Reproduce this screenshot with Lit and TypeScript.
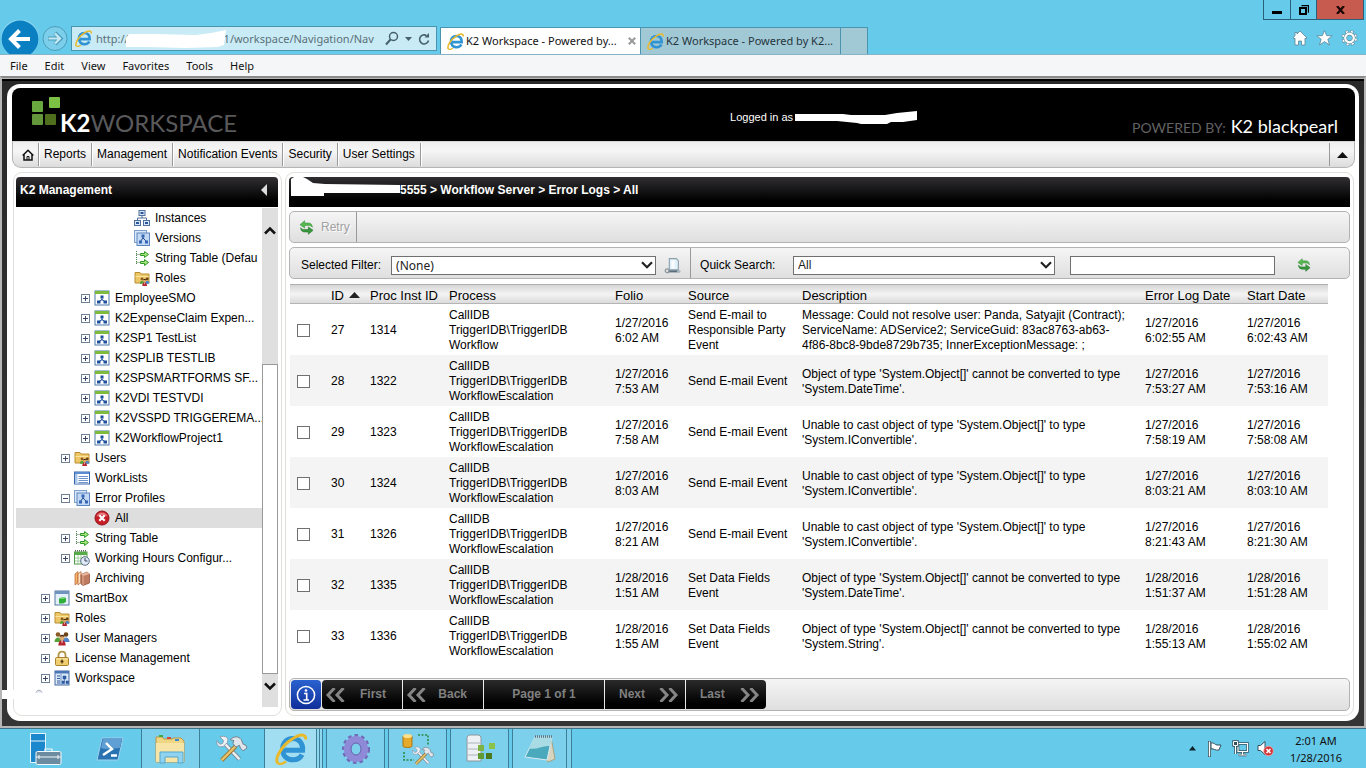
import { LitElement, html, css, svg } from "lit";
import { customElement, property } from "lit/decorators.js";
import { classMap } from "lit/directives/class-map.js";

/* ---------- icon set ---------- */

const ieLogo = svg`
  <path d="M4.2 8.6h9.6c.3-3.4-1.8-5.8-5-5.8-2.9 0-5 2.1-5 5.3s2.100 5.300 5.200 5.300c2.100 0 3.700-1 4.500-2.600" fill="none" stroke="#2f93d4" stroke-width="2.500"/>
  <path d="M4.600 7.700c.6-2.100 2-3.300 4.200-3.300" fill="none" stroke="#8fd0f2" stroke-width=".8"/>
  <path d="M1.500 15.200C-.6 13.200 3.200 6.400 8.600 3 12.500.4 15.500.2 15.400 3.300" fill="none" stroke="#e9b92c" stroke-width="1.500"/>
  <path d="M1.500 15.200c1 .6 2.600.1 4-.9" fill="none" stroke="#e9b92c" stroke-width="1.200"/>`;

const people = svg`
  <circle cx="4" cy="4.500" r="2.300" fill="#8a5a22"/><path d="M.5 12c0-6 7-6 7 0z" fill="#57a13b"/>
  <circle cx="12" cy="4.500" r="2.300" fill="#6b4416"/><path d="M8.500 12c0-6 7-6 7 0z" fill="#4c83c9"/>
  <circle cx="8" cy="7.500" r="2.500" fill="#e0a868"/><path d="M5.600 7c.4-3 4.600-3 4.900 0-1.500-1-3.400-1-4.900 0z" fill="#3c2412"/>
  <path d="M4.300 15.500c0-7 7.400-7 7.400 0z" fill="#b3242c"/><path d="M7.300 10.600h1.500L8 14z" fill="#fff"/>`;

const refreshArrow = "M1 5L6 .8v2.400h3.500c3.200 0 4.700 1.600 4.700 4.600-1-1.500-2.200-2-4.200-2H6v2.800z";

const ICONS: Record<string, unknown> = {
  process: svg`<rect x="1" y="1" width="14" height="14" fill="#fff" stroke="#4d79a8"/><path d="M1 1h14v3H1z" fill="#7dbb3c"/>
    <rect x="6.500" y="5.500" width="3" height="3" fill="#1c4f9c"/><path d="M8 8.500v2M4.500 12l3.500-2.500 3.500 2.500" stroke="#1c4f9c" fill="none"/>
    <rect x="3" y="10.500" width="3.500" height="3" fill="#1c4f9c"/><rect x="9.500" y="10.500" width="3.500" height="3" fill="#1c4f9c"/>`,
  instances: svg`<g fill="#d7e6f8" stroke="#4f6f9c"><rect x="5" y=".5" width="6" height="5"/><rect x=".5" y="10.500" width="6" height="5"/><rect x="9.500" y="10.500" width="6" height="5"/></g>
    <path d="M8 5.500V8M3.500 10.500V8h9v2.500" fill="none" stroke="#4f6f9c"/><path d="M6.500 3h3M2 13h3M11 13h3" stroke="#2c549a" stroke-width="2"/>`,
  versions: svg`<rect x=".5" y=".5" width="12" height="12" fill="#dbe8f7" stroke="#7f9fce"/><rect x="3" y="3" width="12.500" height="12.500" fill="#c3d9f3" stroke="#5e86c1"/>
    <path d="M9 5v3M6 12l3-4 4 4" fill="none" stroke="#224a8c"/><rect x="7.500" y="4.500" width="3" height="3" fill="#3567b4"/><rect x="5" y="10.500" width="3" height="3" fill="#3567b4"/><rect x="11" y="10.500" width="3" height="3" fill="#3567b4"/>`,
  strings: svg`<path d="M2.500 1v14M2.500 4.500h4M2.500 12.500h4" fill="none" stroke="#4f7f4f" stroke-dasharray="1 1"/>
    <path d="M6.500 3.500h4V1.500l4 3-4 3V5.500h-4zM6.500 11.500h4V9.500l4 3-4 3v-2h-4z" fill="#a9e47c" stroke="#2f9a2b"/>`,
  roles: svg`<path d="M1 2.500h5l1 1.500h8v9H1z" fill="#edc765" stroke="#b98d34"/><path d="M1.500 6h13v1h-13z" fill="#f8e3a0"/><g transform="translate(5.500 6) scale(.64)">${people}</g>`,
  people: people,
  list: svg`<rect x=".5" y="2" width="15" height="12" fill="#fff" stroke="#3a66ac"/><path d="M1 2h14v2H1z" fill="#5b8bd0"/><path d="M1 4h2.500v10H1z" fill="#a9c6ea"/><path d="M4.500 6.500h9.500M4.500 8.500h9.500M4.500 10.500h9.500M4.500 12.500h9.500" stroke="#6f95cc"/>`,
  error: svg`<circle cx="8" cy="8" r="7" fill="#c71e26" stroke="#93131a"/><path d="M2.500 6.500C4 1.200 12 1.200 13.500 6.500 10 4.800 6 4.800 2.500 6.500z" fill="#e8777b"/><path d="M5.300 5.300l5.400 5.400M10.700 5.300l-5.400 5.400" stroke="#fff" stroke-width="2.200"/>`,
  hours: svg`<rect x=".5" y="2" width="12.500" height="12" fill="#fff" stroke="#4e9a47"/><path d="M.5 2h12.500v3H.5z" fill="#57ab4b"/><path d="M1 .8h12" stroke="#222" stroke-dasharray="1 1"/><path d="M1 8h12M1 11h12M4 5v9M7 5v9M10 5v9" stroke="#8fc38a" stroke-width=".8"/>
    <circle cx="11" cy="11" r="4.300" fill="#dfe9f6" stroke="#5d6f8d"/><path d="M11 8v3h2.500" fill="none" stroke="#33435f"/>`,
  archive: svg`<path d="M1 4l3-2.500v11L1 15z" fill="#f6b26a" stroke="#b5602c" stroke-width=".7"/><path d="M4 4l3-2.500v11L4 15z" fill="#fbe0c2" stroke="#b5602c" stroke-width=".7"/><path d="M7 4.500l6-2.500 2.500 2v9L9 15.500 7 14z" fill="#bf7b5e" stroke="#8a4c34" stroke-width=".7"/><path d="M7 4.500l2 1.500 6.500-2-2.500-2z" fill="#e7b69e"/><path d="M9 6v9.500" stroke="#e2b09a"/>`,
  smartbox: svg`<rect x="1" y="1" width="14" height="14" fill="#e3effb" stroke="#56799f"/><path d="M1 1h14v3H1z" fill="#6f95be"/><path d="M5 8.500l4-1.500 3 1v4l-3 1.500H5z" fill="#2fae3a"/><path d="M5 8.500l4-1.500 3 1-3 1z" fill="#80dc79"/>`,
  lock: svg`<path d="M4.500 8V5c0-4.500 7-4.500 7 0v3" fill="none" stroke="#b29445" stroke-width="1.800"/><rect x="1.500" y="7.500" width="13" height="8" rx="1.200" fill="#f0cd6e" stroke="#a8822b"/><path d="M2.500 9h11" stroke="#fbecb6"/><path d="M8 9.500v4M6.500 11.500h3" stroke="#4f3a10" stroke-width="1.300"/>`,
  workspace: svg`<rect x="1" y="1" width="14" height="14" fill="#dbe8f8" stroke="#44689d"/><path d="M1 1h14v2.500H1z" fill="#4a77b5"/><path d="M3 6h3M3 8.500h3M3 11h3M3 13h3" stroke="#345b97"/><path d="M7 4v11" stroke="#6f92c3"/><path d="M9 6h3v3H9zM8 11h2.500v2.500H8zM12 11h2.500v2.500H12zM10.500 9v2" fill="#2d5aa2" stroke="#2d5aa2" stroke-width=".6"/>`,
  refresh: svg`<path d=${refreshArrow} fill="#58b850" stroke="#3a9440" stroke-width=".6"/><path d=${refreshArrow} transform="rotate(180 8 8)" fill="#37983b" stroke="#236f2c" stroke-width=".6"/>`,
  filter: svg`<path d="M5 1.500h6.500l2 2V12H5z" fill="#e2f0f9" stroke="#8a9eac"/><path d="M7 3h3v8H7z" fill="#f8fcff"/><path d="M4 13.500h9.500" stroke="#5c6f7c" stroke-width="2"/><circle cx="3" cy="13" r="1.800" fill="none" stroke="#8d979e" stroke-width="1.200"/><circle cx="14" cy="13.500" r="1.600" fill="#aab9c3"/>`,
};

const icon = (name: string, size = 16) =>
  html`<svg width=${size} height=${size} viewBox="0 0 16 16" aria-hidden="true">${ICONS[name]}</svg>`;
const ie = (size: number) => html`<svg width=${size} height=${size} viewBox="0 0 16 16" aria-hidden="true">${ieLogo}</svg>`;
const chevron = html`<svg class="chev" width="12" height="8" viewBox="0 0 12 8" aria-hidden="true"><path d="M1 1.200l5 5 5-5" fill="none" stroke="#222" stroke-width="2.200"/></svg>`;
const doubleLeft = html`<svg width="20" height="14" viewBox="0 0 20 14" aria-hidden="true"><path d="M9.500 0L3 7l6.500 7M18.500 0L12 7l6.500 7" fill="none" stroke="#858585" stroke-width="3"/></svg>`;
const doubleRight = html`<svg width="20" height="14" viewBox="0 0 20 14" aria-hidden="true"><path d="M1.500 0L8 7l-6.500 7M10.500 0L17 7l-6.500 7" fill="none" stroke="#858585" stroke-width="3"/></svg>`;

/* ---------- browser chrome ---------- */

@customElement("browser-chrome")
export class BrowserChrome extends LitElement {
  static styles = css`
    :host { display: block; flex: none; font: 11px/16px "Noto Sans", "Open Sans", sans-serif; color: #111; }
    button { border: 0; padding: 0; margin: 0; background: none; font: inherit; color: inherit; display: grid; place-items: center; }
    svg { display: block; flex: none; }
    .bar { display: flex; align-items: flex-end; height: 54px; background: #66caea; border-bottom: 1px solid #86b3c6; overflow: hidden; }
    .back { width: 40px; height: 36px; margin: 0 2px -2px 0; }
    .fwd { width: 28px; height: 30px; }
    .address { position: relative; display: flex; align-items: center; width: 355px; height: 23px; margin: 0 3px 3px 1px; padding: 0 6px 0 3px; background: #c9ebf6; border: 1px solid #4a94b0; }
    .address input { flex: 1; min-width: 0; border: 0; outline: 0; padding: 0 0 0 4px; background: none; color: #5b7078; font: 11px/18px "Noto Sans", sans-serif; }
    .address button { margin-left: 6px; }
    .mask { position: absolute; left: 54px; top: 3px; }
    .tab { display: flex; align-items: center; width: 193px; height: 26px; padding: 0 0 0 6px; background: #a1c8d5; border: 1px solid #4a94b0; border-bottom: 0; border-left: 0; color: #25353c; }
    .tab.on { background: #fff; border-left: 1px solid #4a94b0; color: #111; }
    .tab span { flex: 1; margin-left: 2px; white-space: nowrap; }
    .tab button { margin: 0 4px 0 2px; }
    .newtab { width: 27px; height: 27px; background: #a1c8d5; border: 1px solid #4a94b0; border-width: 1px 1px 0 0; }
    .side { margin-left: auto; height: 54px; display: flex; flex-direction: column; align-items: flex-end; justify-content: space-between; }
    .win { display: flex; height: 20px; margin-right: 2px; border: 1px solid #27617a; border-top: 0; box-sizing: border-box; }
    .win button { width: 26px; border-right: 1px solid #27617a; }
    .win .first { width: 27px; }
    .win .close { width: 46px; background: #c75b50; border: 0; }
    .tools { display: flex; gap: 8px; margin: 0 8px 8px 0; }
    .menu { display: flex; gap: 17px; height: 21px; align-items: center; padding: 0 10px; background: #f5f6f7; }
  `;
  render() {
    const url = "http://" + "\u00a0".repeat(31) + "81/workspace/Navigation/Nav";
    return html`
      <div class="bar">
        <button class="back" aria-label="Back"><svg width="40" height="36" viewBox="0 0 40 36"><circle cx="20" cy="18.500" r="19" fill="#fff" opacity=".3"/><circle cx="20" cy="19" r="18.500" fill="#0a7fc2"/><path d="M30 19H12M19.500 10.500L11 19l8.500 8.500" fill="none" stroke="#fff" stroke-width="4"/></svg></button>
        <button class="fwd" aria-label="Forward"><svg width="28" height="30" viewBox="0 0 28 30"><circle cx="13" cy="14.500" r="12" fill="#7ccfeb" stroke="#4b9cba"/><path d="M6 14.500h13M13 9l5.500 5.500-5.500 5.500" fill="none" stroke="#4b9cba" stroke-width="4"/><path d="M6.500 14.500H18M13 9.500l5 5-5 5" fill="none" stroke="#c4e9f5" stroke-width="2.200"/></svg></button>
        <div class="address">${ie(17)}
          <input type="text" aria-label="Address" .value=${url} />
          <svg class="mask" width="102" height="20" viewBox="0 0 102 20" aria-hidden="true"><path d="M0 8L3 4l28 0 39 1 15-2L100 0l-2 15-6 2-32 1-40-1H0z" fill="#fff"/></svg>
          <button aria-label="Search"><svg width="14" height="15" viewBox="0 0 14 15"><circle cx="8.500" cy="5.500" r="4" fill="none" stroke="#46616c" stroke-width="1.500"/><path d="M5.500 8.500L1 13.500" stroke="#46616c" stroke-width="2"/></svg></button>
          <button aria-label="Show address list"><svg width="7" height="4" viewBox="0 0 7 4"><path d="M0 0h7L3.500 4z" fill="#46616c"/></svg></button>
          <button aria-label="Refresh"><svg width="12" height="14" viewBox="0 0 12 14"><path d="M10.500 8.500A4.500 4.500 0 1 1 8.500 3.600" fill="none" stroke="#46616c" stroke-width="1.600"/><path d="M6.500 5.500h4.500V1z" fill="#46616c"/></svg></button>
        </div>
        <div class="tab on">${ie(17)}<span>K2 Workspace - Powered by...</span>
          <button aria-label="Close tab"><svg width="8" height="8" viewBox="0 0 8 8"><path d="M.8.8l6.400 6.400M7.200.8L.8 7.200" stroke="#999" stroke-width="2"/></svg></button></div>
        <div class="tab">${ie(17)}<span>K2 Workspace - Powered by K2...</span></div>
        <button class="newtab" aria-label="New tab"></button>
        <div class="side">
          <div class="win">
            <button class="first" aria-label="Minimize"><svg width="10" height="10" viewBox="0 0 10 10"><path d="M0 6h10v3H0z"/></svg></button>
            <button aria-label="Restore"><svg width="10" height="10" viewBox="0 0 10 10"><path d="M2.500.7h7v7" fill="none" stroke="#000" stroke-width="1.300"/><rect x="1" y="3" width="6" height="6" fill="none" stroke="#000" stroke-width="2"/></svg></button>
            <button class="close" aria-label="Close"><svg width="9" height="8" viewBox="0 0 9 8"><path d="M1 0l7 8M8 0L1 8" stroke="#1c0806" stroke-width="2.300"/></svg></button>
          </div>
          <div class="tools">
            <button aria-label="Home"><svg width="16" height="16" viewBox="0 0 16 16"><path d="M8 1l7 7-1 1-1-.8V15H9.500v-4h-3v4H3V8.200L2 9 1 8l2-2.200V2.500h2V4z" fill="#fff" stroke="#5c8798" stroke-width=".8"/></svg></button>
            <button aria-label="Favorites"><svg width="17" height="16" viewBox="0 0 17 16"><path d="M8.500.5l2.200 5.200h5.500l-4.400 3.600 1.700 5.700-5-3.400-5 3.400 1.700-5.700L.8 5.700h5.500z" fill="#fff" stroke="#5c8798" stroke-width=".8"/></svg></button>
            <button aria-label="Tools"><svg width="17" height="16" viewBox="0 0 17 16"><g transform="translate(8.500 8)"><circle r="6" fill="none" stroke="#5c8798" stroke-width="3.800" stroke-dasharray="3 1.710"/><circle r="6" fill="none" stroke="#fff" stroke-width="2.800" stroke-dasharray="2 2.710" stroke-dashoffset="-.5"/><circle r="4.200" fill="none" stroke="#5c8798" stroke-width="3.400"/><circle r="4.300" fill="none" stroke="#fff" stroke-width="2.200"/></g></svg></button>
          </div>
        </div>
      </div>
      <div class="menu">${["File", "Edit", "View", "Favorites", "Tools", "Help"].map((m) => html`<button>${m}</button>`)}</div>
    `;
  }
}

/* ---------- tree panel ---------- */

type Node = [level: number, toggle: string, icon: string, label: string];
const NODES: Node[] = [
  [4, "", "instances", "Instances"],
  [4, "", "versions", "Versions"],
  [4, "", "strings", "String Table (Defau"],
  [4, "", "roles", "Roles"],
  [2, "+", "process", "EmployeeSMO"],
  [2, "+", "process", "K2ExpenseClaim Expen..."],
  [2, "+", "process", "K2SP1 TestList"],
  [2, "+", "process", "K2SPLIB TESTLIB"],
  [2, "+", "process", "K2SPSMARTFORMS SF..."],
  [2, "+", "process", "K2VDI TESTVDI"],
  [2, "+", "process", "K2VSSPD TRIGGEREMA..."],
  [2, "+", "process", "K2WorkflowProject1"],
  [1, "+", "roles", "Users"],
  [1, "", "list", "WorkLists"],
  [1, "-", "versions", "Error Profiles"],
  [2, "", "error", "All"],
  [1, "+", "strings", "String Table"],
  [1, "+", "hours", "Working Hours Configur..."],
  [1, "", "archive", "Archiving"],
  [0, "+", "smartbox", "SmartBox"],
  [0, "+", "roles", "Roles"],
  [0, "+", "people", "User Managers"],
  [0, "+", "lock", "License Management"],
  [0, "+", "workspace", "Workspace"],
];

@customElement("nav-tree")
export class NavTree extends LitElement {
  @property() selected = "All";
  static styles = css`
    :host { display: flex; flex-direction: column; min-height: 0; min-width: 0; }
    svg { display: block; flex: none; }
    .head { display: flex; align-items: center; justify-content: space-between; height: 30px; padding: 0 11px 4px 4px; box-sizing: border-box; flex: none; margin-bottom: 1px; border-radius: 4px 4px 0 0; background: linear-gradient(#302e31, #000 80%); color: #fff; font-size: 12px; font-weight: bold; }
    .head button, .bar button { border: 0; padding: 0; background: none; }
    .area { display: flex; flex: 1; min-height: 0; margin-bottom: 4px; }
    .list { flex: 1; min-width: 0; overflow: hidden; margin: 0; padding: 0; list-style: none; }
    .node { display: flex; align-items: center; height: 20px; padding-left: 25px; white-space: nowrap; overflow: hidden; }
    .l1 { padding-left: 45px; } .l2 { padding-left: 65px; } .l4 { padding-left: 105px; }
    .node.on { background: #dedede; }
    .toggle { width: 9px; margin-right: 4px; flex: none; }
    .label { margin-left: 5px; }
    .rest { margin: 1px 0 0 19px; }
    .bar { width: 16px; flex: none; display: flex; flex-direction: column; background: #dfdfdf; }
    .thumb { flex: 1; background: #fff; border: 1px solid #999; }
    .up { height: 156px; display: flex; justify-content: center; }
    .up button { height: 44px; }
    .down { height: 33px; display: flex; justify-content: center; }
    .down button { height: 24px; }
  `;
  render() {
    return html`
      <div class="head"><span>K2 Management</span><button aria-label="Collapse panel"><svg width="6" height="12" viewBox="0 0 6 12"><path d="M6 0v12L0 6z" fill="#ddd"/></svg></button></div>
      <div class="area">
        <ul class="list">
          ${NODES.map(([lv, tg, ic, label]) => html`<li class=${classMap({ node: true, ["l" + lv]: true, on: label === this.selected })}>
            <span class="toggle">${tg
              ? html`<svg width="9" height="9" viewBox="0 0 9 9"><rect x=".5" y=".5" width="8" height="8" fill="#fff" stroke="#6d7f90"/><path d=${tg === "+" ? "M2 4.500h5M4.500 2v5" : "M2 4.500h5"} stroke="#3b4a66"/></svg>`
              : ""}</span>${icon(ic)}<span class="label">${label}</span></li>`)}
          <li class="rest"><svg width="8" height="4" viewBox="0 0 8 4"><path d="M1 3.500C2 .5 6 .5 7 3.500" fill="#dde2ee" stroke="#a5a9b8"/></svg></li>
        </ul>
        <div class="bar">
          <div class="up"><button aria-label="Scroll up"><svg width="12" height="9" viewBox="0 0 12 9"><path d="M1 7.500l5-5 5 5" fill="none" stroke="#111" stroke-width="2.500"/></svg></button></div>
          <div class="thumb"></div>
          <div class="down"><button aria-label="Scroll down"><svg width="12" height="9" viewBox="0 0 12 9"><path d="M1 1.500l5 5 5-5" fill="none" stroke="#111" stroke-width="2.500"/></svg></button></div>
        </div>
      </div>`;
  }
}

/* ---------- error log ---------- */

const ESC = "CallIDB\nTriggerIDB\\TriggerIDB\nWorkflowEscalation";
const TO_DATE = "Object of type 'System.Object[]' cannot be converted to type\n'System.DateTime'.";
const CAST = "Unable to cast object of type 'System.Object[]' to type\n'System.IConvertible'.";
const ROWS: string[][] = [
  ["27", "1314", "CallIDB\nTriggerIDB\\TriggerIDB\nWorkflow", "1/27/2016\n6:02 AM", "Send E-mail to\nResponsible Party\nEvent", "Message: Could not resolve user: Panda, Satyajit (Contract);\nServiceName: ADService2; ServiceGuid: 83ac8763-ab63-\n4f86-8bc8-9bde8729b735; InnerExceptionMessage: ;", "1/27/2016\n6:02:55 AM", "1/27/2016\n6:02:43 AM"],
  ["28", "1322", ESC, "1/27/2016\n7:53 AM", "Send E-mail Event", TO_DATE, "1/27/2016\n7:53:27 AM", "1/27/2016\n7:53:16 AM"],
  ["29", "1323", ESC, "1/27/2016\n7:58 AM", "Send E-mail Event", CAST, "1/27/2016\n7:58:19 AM", "1/27/2016\n7:58:08 AM"],
  ["30", "1324", ESC, "1/27/2016\n8:03 AM", "Send E-mail Event", CAST, "1/27/2016\n8:03:21 AM", "1/27/2016\n8:03:10 AM"],
  ["31", "1326", ESC, "1/27/2016\n8:21 AM", "Send E-mail Event", CAST, "1/27/2016\n8:21:43 AM", "1/27/2016\n8:21:30 AM"],
  ["32", "1335", ESC, "1/28/2016\n1:51 AM", "Set Data Fields\nEvent", TO_DATE, "1/28/2016\n1:51:37 AM", "1/28/2016\n1:51:28 AM"],
  ["33", "1336", ESC, "1/28/2016\n1:55 AM", "Set Data Fields\nEvent", "Object of type 'System.Object[]' cannot be converted to type\n'System.String'.", "1/28/2016\n1:55:13 AM", "1/28/2016\n1:55:02 AM"],
];

@customElement("error-log")
export class ErrorLog extends LitElement {
  static styles = css`
    :host { display: flex; flex-direction: column; min-height: 0; }
    svg { display: block; flex: none; }
    button { border: 0; padding: 0; margin: 0; background: none; font: inherit; color: inherit; }
    .crumb { display: flex; align-items: flex-start; height: 30px; flex: none; padding-left: 2px; border-radius: 4px 4px 0 0; background: linear-gradient(#302e31, #000 80%); color: #fff; font-size: 12px; font-weight: bold; line-height: 26px; white-space: pre; }
    .bar { display: flex; align-items: center; height: 32px; box-sizing: border-box; flex: none; margin-top: 4px; border: 1px solid #b3b3b3; border-radius: 5px; background: linear-gradient(#f5f5f5, #dfdfdf); }
    .retry { display: flex; align-items: center; height: 30px; padding: 0 6px 0 9px; border-right: 1px solid #999; color: #a0a0a0; text-shadow: 1px 1px 0 #fff; }
    .retry span { margin-left: 7px; }
    .filters label { white-space: nowrap; margin-top: 4px; }
    .filters label.first { margin-left: 11px; }
    .filters label.quick { width: 93px; margin-left: 9px; }
    .pick { display: grid; align-items: center; margin-top: 4px; margin-left: 10px; flex: 0 1 265px; }
    .pick.b { margin-left: 0; flex-basis: 262px; }
    .pick > * { grid-area: 1 / 1; }
    .pick .chev { justify-self: end; margin-right: 3px; pointer-events: none; }
    select { appearance: none; width: 100%; height: 19px; box-sizing: border-box; padding: 0 4px; border: 1px solid #707070; border-radius: 0; background: #fff; color: #222; font: 12px/15px "Liberation Sans", Arial, sans-serif; }
    select.wide { font-family: "Noto Sans", sans-serif; }
    .filterbtn { margin: 4px 9px 0 8px; }
    .div { align-self: stretch; width: 1px; background: #999; }
    .term { width: 205px; height: 19px; box-sizing: border-box; margin: 4px 22px 0 15px; border: 1px solid #707070; padding: 0 3px; font: inherit; }
    .go { margin-top: 4px; }
    .scroll { flex: 1; min-height: 0; overflow: hidden; padding: 5px 22px 0 1px; }
    table { width: 100%; table-layout: fixed; border-collapse: collapse; }
    th, td { text-align: left; padding: 0 2px; font-weight: normal; }
    thead tr { height: 20px; background: linear-gradient(#d2d2d2, #f4f4f4 50%, #d8d8d8); box-shadow: inset 0 1px #b0b0b0, inset 0 -1px #b5b5b5; }
    th { font-size: 13px; line-height: 14px; padding-top: 3px; white-space: nowrap; }
    td { height: 45px; padding-top: 4px; padding-bottom: 2px; line-height: 15px; white-space: pre-line; box-sizing: content-box; }
    tbody tr:nth-child(even) { background: #f4f4f4; }
    .sort { display: inline-block; margin-left: 5px; vertical-align: 2px; }
    .c0, .c1 { width: 39px; } .c2 { width: 79px; } .c3 { width: 166px; } .c4 { width: 73px; } .c5 { width: 114px; } .c7 { width: 102px; } .c8 { width: 83px; }
    .tick { appearance: none; display: block; width: 13px; height: 13px; margin: 0 0 0 5px; border: 1px solid #707070; background: #fff; }
    .pager { display: flex; align-items: center; height: 33px; box-sizing: border-box; flex: none; padding: 0 1px; border: 1px solid #b3b3b3; border-radius: 5px; background: linear-gradient(#f5f5f5, #dfdfdf); }
    .info { width: 30px; height: 29px; display: grid; place-items: center; border-radius: 4px; background: linear-gradient(#2a62cf, #102f9a); margin-right: 1px; }
    .steps { display: flex; gap: 1px; height: 29px; border-radius: 4px; overflow: hidden; font-weight: bold; color: #808080; }
    .step { display: flex; align-items: center; justify-content: space-between; width: 80px; padding: 0 16px 0 3px; box-sizing: border-box; background: linear-gradient(#2b2b2b, #000 80%); }
    .step.fwd { padding: 0 6px 0 14px; }
    .step.page { width: 120px; justify-content: center; padding: 0; }
  `;
  render() {
    const heads = ["ID", "Proc Inst ID", "Process", "Folio", "Source", "Description", "Error Log Date", "Start Date"];
    return html`
      <div class="crumb"><svg width="109" height="20" viewBox="0 0 109 20" aria-hidden="true"><path d="M0 2L3 0h9l4 2 6 4 12 1 75 1v8H33v3H0z" fill="#fff"/></svg>5555 &gt; Workflow Server &gt; Error Logs &gt; All</div>
      <div class="bar"><button class="retry" disabled>${icon("refresh", 15)}<span>Retry</span></button></div>
      <div class="bar filters">
        <label class="first" for="filter">Selected Filter:</label>
        <div class="pick"><select id="filter" class="wide"><option>(None)</option></select>${chevron}</div>
        <button class="filterbtn" aria-label="Edit filter">${icon("filter", 17)}</button>
        <div class="div"></div>
        <label class="quick" for="field">Quick Search:</label>
        <div class="pick b"><select id="field"><option>All</option></select>${chevron}</div>
        <input class="term" type="text" aria-label="Search text" />
        <button class="go" aria-label="Search">${icon("refresh", 14)}</button>
      </div>
      <div class="scroll">
        <table>
          <colgroup>${[0, 1, 2, 3, 4, 5, 6, 7, 8].map((i) => html`<col class=${"c" + i} />`)}</colgroup>
          <thead><tr><th></th>${heads.map((h, i) => html`<th>${h}${i === 0 ? html`<svg class="sort" width="11" height="6" viewBox="0 0 11 6" aria-hidden="true"><path d="M0 6h11L5.500 0z" fill="#222"/></svg>` : ""}</th>`)}</tr></thead>
          <tbody>${ROWS.map((r) => html`<tr><td><input class="tick" type="checkbox" aria-label=${"Select " + r[0]} /></td>${r.map((c) => html`<td>${c}</td>`)}</tr>`)}</tbody>
        </table>
      </div>
      <div class="pager">
        <button class="info" aria-label="Information"><svg width="20" height="20" viewBox="0 0 20 20"><circle cx="10" cy="10" r="8.600" fill="none" stroke="#fff" stroke-width="1.500"/><path d="M8 8.500h2.700V15M7.500 15h5.500" fill="none" stroke="#fff" stroke-width="1.600"/><circle cx="10" cy="5.500" r="1.300" fill="#fff"/></svg></button>
        <div class="steps">
          <button class="step">${doubleLeft}First</button>
          <button class="step">${doubleLeft}Back</button>
          <span class="step page">Page 1 of 1</span>
          <button class="step fwd">Next${doubleRight}</button>
          <button class="step fwd">Last${doubleRight}</button>
        </div>
      </div>`;
  }
}

/* ---------- taskbar ---------- */

const tools = svg`<path d="M9 9l16 17" stroke="#7d8995" stroke-width="4.500"/><path d="M9 9l16 17" stroke="#edf1f5" stroke-width="2.600"/><path d="M4 2l4 4-1 3-3 1-3-4c-1 5 2 8 7 6l4-4c2-5-2-8-8-6z" fill="#eef2f6" stroke="#8795a3" stroke-width=".9"/>
  <path d="M21 12L6 27" stroke="#94702c" stroke-width="4.500"/><path d="M21 12L6 27" stroke="#e6c16b" stroke-width="2.600"/><path d="M15 5c4-4 9-4 12 0l2 5 3 1 1 3-4 3-3-3-1-3-4 2-3-4 1-3z" fill="#dfe5ea" stroke="#6f7b87"/>`;

@customElement("task-bar")
export class TaskBar extends LitElement {
  static styles = css`
    :host { display: flex; align-items: stretch; height: 39px; flex: none; background: #66caea; border-top: 1px solid #3f7285; font: 11px/16px "Noto Sans", "Open Sans", sans-serif; color: #111; }
    button { border: 0; padding: 0; margin: 0; background: none; display: grid; place-items: center; width: 63px; }
    svg { display: block; }
    .start { width: 78px; padding-left: 14px; box-sizing: border-box; }
    .run { box-sizing: border-box; width: 59px; background: #7dd0ec; border: 1px solid #3d7f98; border-width: 0 1px; }
    .run.on { width: 53px; background: #a2def2; }
    .group { display: flex; gap: 3px; margin-left: 3px; }
    .group .run.last { width: 55px; }
    .stack { width: 3px; border-right: 1px solid #3d7f98; box-sizing: border-box; background: #8fd7ef; }
    .stack.w { width: 5px; background: #7dd0ec; }
    .wide { width: 64px; }
    .tray { display: flex; align-items: center; margin-left: auto; gap: 8px; }
    .tray button { width: auto; }
    .clock { width: 68px; margin-right: 16px; text-align: center; line-height: 17px; }
  `;
  render() {
    return html`
      <button class="start" aria-label="Server Manager"><svg width="34" height="34" viewBox="0 0 34 34"><path d="M1.500 1.500h15v29h-15z" fill="#1b87cc" stroke="#e8f6fc"/><path d="M2 9h14" stroke="#e8f6fc"/><path d="M16 20v-3h7v3" fill="none" stroke="#eef5f8" stroke-width="1.200"/><rect x="7" y="19.500" width="25" height="13" rx="1.500" fill="#6a8ba0" stroke="#f4f8fa"/><path d="M7 25h25M10 23v4M29 23v4" stroke="#f4f8fa"/></svg></button>
      <button aria-label="PowerShell"><svg width="28" height="24" viewBox="0 0 28 24"><path d="M6 1h21l-5 22H1z" fill="#2a73b2" stroke="#9fd2ee"/><path d="M7 2h19l-2 9c-8 0-14 2-19 0z" fill="#5f9fd3"/><path d="M10 6l6 6-9 6M15 18.500h6" fill="none" stroke="#fff" stroke-width="2.400"/></svg></button>
      <button class="run" aria-label="File Explorer"><svg width="34" height="30" viewBox="0 0 34 30"><path d="M2 3h6l2 2h8l2-1h7l3 3v21H2z" fill="#f0d583" stroke="#b6974a"/><path d="M5 1h4v2H5z" fill="#3faa40"/><path d="M13 3h4v2h-4z" fill="#d44b3b"/><path d="M21 5h4v2h-4z" fill="#3b8bd4"/><path d="M2 9h28v19H2z" fill="#f7e5a8"/><path d="M6 29V18h23v11h-5v-6H11v6z" fill="#8fd3f0" stroke="#55a7cd"/></svg></button>
      <button class="wide" aria-label="Tools"><svg width="32" height="28" viewBox="0 0 34 30">${tools}</svg></button>
      <button class="run on" aria-label="Internet Explorer">${ie(32)}</button><i class="stack"></i><i class="stack"></i>
      <div class="group">
        <button class="run" aria-label="Services"><svg width="30" height="32" viewBox="0 0 30 32"><ellipse cx="15" cy="16" rx="12.500" ry="13.500" fill="none" stroke="#7168b8" stroke-width="3" stroke-dasharray="3.600 3"/><ellipse cx="15" cy="16" rx="8.500" ry="9.500" fill="none" stroke="#8f8ad8" stroke-width="7"/><ellipse cx="15" cy="16" rx="5" ry="6" fill="none" stroke="#6860aa"/></svg></button>
        <button class="run" aria-label="Database tools"><svg width="34" height="32" viewBox="0 0 34 32"><path d="M2 3v10c0 2 9 2 9 0V3z" fill="#e5a92c" stroke="#a87412"/><ellipse cx="6.500" cy="3" rx="4.500" ry="2" fill="#fbe08b"/><path d="M17 2h10v10M3 19v8h10" fill="none" stroke="#2c8a44" stroke-width="1.600" stroke-dasharray="2 1.500"/><g transform="translate(11 13) scale(.66)">${tools}</g></svg></button>
        <button class="run" aria-label="K2 Server"><svg width="30" height="30" viewBox="0 0 30 30"><path d="M2 3l2-2h10l2 2v24H2z" fill="#edf1f4" stroke="#8b969f"/><path d="M3 9h12M3 15h12M3 21h12" stroke="#aab4bc"/><path d="M13 11h6v6h-6z" fill="#7cb342"/><path d="M24 9h6v6h-6z" fill="#8bc34a"/><path d="M13 19h6v6h-6z" fill="#5f9a33"/><path d="M21 19h6v6h-6z" fill="#4b7a1e"/></svg></button>
        <button class="run last" aria-label="Notepad"><svg width="32" height="30" viewBox="0 0 32 30"><path d="M27 3l4 22-7 3-3-4z" fill="#d9d4c0" stroke="#a08f60" stroke-width=".7"/><path d="M11 3h17l-5 23L1 23z" fill="#4aa9bd" stroke="#d8edf3"/><path d="M11 3h17l-2 9C18 11 11 17 5 14z" fill="#a8dbe4"/><path d="M11 2.500h17" stroke="#5f737c" stroke-width="2.500" stroke-dasharray="1 1"/></svg></button>
      </div><i class="stack w"></i>
      <div class="tray">
        <button aria-label="Show hidden icons"><svg width="7" height="5" viewBox="0 0 7 5"><path d="M0 4.500h7L3.500 0z" fill="#0f2229"/></svg></button>
        <button aria-label="Action Center"><svg width="20" height="18" viewBox="0 0 20 18"><path d="M7 3c3-1 4 2 6 2h4l-2 5c-4 1-5-2-8-1z" fill="#fff" stroke="#34515c"/><path d="M5.500 1v16" stroke="#34515c" stroke-width="3"/><path d="M5.500 1.500v15" stroke="#fff" stroke-width="1.400"/></svg></button>
        <button aria-label="Network"><svg width="17" height="17" viewBox="0 0 17 17"><path d="M6 3.500h9.500v8H6zM10.500 12v3M6.500 15h8" fill="none" stroke="#34515c" stroke-width="2.600"/><path d="M6 3.500h9.500v8H6zM10.500 12v3M6.500 15h8" fill="none" stroke="#fff" stroke-width="1.200"/><path d="M1.500 1.500h4v4h-4zM3.500 5.500v8.500" fill="#66caea" stroke="#34515c" stroke-width="2.400"/><path d="M1.500 1.500h4v4h-4zM3.500 5.500v8.500" fill="#34515c" stroke="#fff" stroke-width="1"/></svg></button>
        <button aria-label="Volume"><svg width="17" height="17" viewBox="0 0 17 17"><path d="M1 5.500h2.500L8 1.500v13l-4.500-4H1z" fill="#fff" stroke="#34515c"/><circle cx="11.500" cy="11" r="4.800" fill="#d2363a" stroke="#f2b0ae" stroke-width=".7"/><path d="M9.500 9l4 4M13.500 9l-4 4" stroke="#fff" stroke-width="1.600"/></svg></button>
        <div class="clock">2:01 AM<br />1/28/2016</div>
      </div>`;
  }
}

/* ---------- page ---------- */

@customElement("app-root")
export class AppRoot extends LitElement {
  static styles = css`
    :host { display: flex; flex-direction: column; height: 100vh; font: 12px/15px "Liberation Sans", Arial, sans-serif; color: #000; overflow: hidden; }
    svg { display: block; flex: none; }
    .frame { position: relative; display: flex; flex: 1; min-height: 0; box-sizing: border-box; padding: 6px 5px 5px; background: linear-gradient(#000 0 3px, #292929 3px, #353535); border: 2px solid #b6b6b6; box-shadow: inset 0 1px #b6b6b6; border-top-color: #8a8a8a; }
    .shell { display: flex; flex-direction: column; flex: 1; min-width: 0; box-sizing: border-box; padding: 4px 4px 5px 5px; background: #fff; border-radius: 13px; }
    .top { display: flex; height: 53px; flex: none; padding: 0 17px 0 20px; background: #000; border-radius: 8px 8px 0 0; }
    .brand { display: flex; font: 24px/28px Lato, sans-serif; color: #59595b; }
    .brand svg { margin-top: 9px; }
    .brand p { margin: 21px 0 0; }
    .brand b { color: #fff; }
    .user { display: flex; align-items: center; gap: 2px; flex: 1; justify-content: flex-end; margin: 6px 215px 0 0; color: #fff; font-size: 11px; }
    .power { display: flex; align-items: baseline; gap: 5px; margin: 26px 0 0; font: 14px/24px Lato, sans-serif; color: #626264; white-space: nowrap; }
    .power b { color: #fff; font-weight: normal; font-size: 18px; }
    .nav { display: flex; align-items: stretch; height: 27px; box-sizing: border-box; flex: none; padding: 1px 0; border: 1px solid #b5b5b5; border-top-color: #d5d5d5; border-radius: 0 0 9px 9px; background: linear-gradient(#efefef, #f6f6f6 35%, #dcdcdc); }
    .nav a { display: flex; align-items: center; padding: 0 5px; border-right: 1px solid #999; box-shadow: 1px 0 #fff; color: #000; text-decoration: none; white-space: nowrap; }
    .nav a.home { padding: 0 4px 0 9px; }
    .nav button { margin-left: auto; width: 25px; display: grid; place-items: center; padding: 0; border: 0; border-left: 1px solid #999; background: none; }
    .cols { display: flex; gap: 3px; flex: 1; min-height: 0; margin: 4px 0 0; padding: 0 1px; }
    nav-tree, error-log { box-sizing: border-box; border: 1px solid #dfdfdb; border-radius: 9px; padding: 4px 3px; }
    nav-tree { flex: 0 0 269px; min-width: 0; padding: 4px 3px 4px 2px; }
    error-log { flex: 1; min-width: 0; }
    .smudge { position: absolute; left: 0; bottom: 27px; width: 14px; height: 9px; background: #fff; }
  `;
  render() {
    const links = ["Reports", "Management", "Notification Events", "Security", "User Settings"];
    return html`
      <browser-chrome></browser-chrome>
      <main class="frame">
        <div class="shell">
          <header class="top">
            <div class="brand">
              <svg width="28" height="28" viewBox="0 0 28 28" aria-hidden="true"><rect y="4" width="11" height="11" rx="1" fill="#69a83f"/><rect x="17" width="11" height="11" rx="1" fill="#7cc143"/><rect y="17" width="11" height="11" rx="1" fill="#64973b"/><rect x="13" y="17" width="11" height="11" rx="1" fill="#4f6f1e"/></svg>
              <p><b>K2</b>WORKSPACE</p>
            </div>
            <p class="user">Logged in as <svg width="122" height="14" viewBox="0 0 122 14" aria-hidden="true"><path d="M0 3h48l8 1 34 0 12-2 20-2v9l-14 2-12 0-4 2H66l-4-1-20-2H0z" fill="#fff"/></svg></p>
            <p class="power"><span>POWERED BY:</span> <b>K2 blackpearl</b></p>
          </header>
          <nav class="nav">
            <a class="home" href="#" aria-label="Home"><svg width="12" height="12" viewBox="0 0 12 12"><path d="M.7 6.500L6 1.200l5.300 5.300M2 5.500V11h8V5.500" fill="none" stroke="#111" stroke-width="1.500"/><path d="M5 11V7.500h2V11" fill="none" stroke="#111"/></svg></a>
            ${links.map((l) => html`<a href="#">${l}</a>`)}
            <button aria-label="Collapse header"><svg width="11" height="6" viewBox="0 0 11 6"><path d="M0 6h11L5.500 0z" fill="#111"/></svg></button>
          </nav>
          <div class="cols"><nav-tree></nav-tree><error-log></error-log></div>
        </div>
        <div class="smudge"></div>
      </main>
      <task-bar></task-bar>`;
  }
}
